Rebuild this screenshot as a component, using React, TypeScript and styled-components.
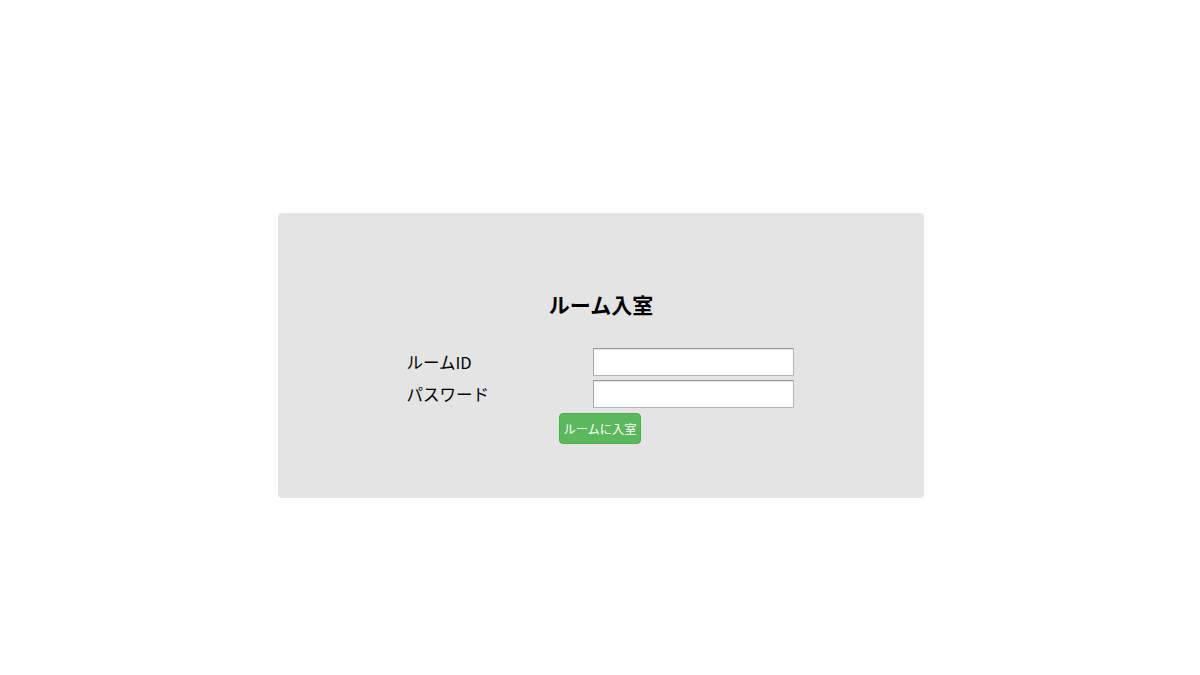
import React from "react";
import styled, { createGlobalStyle } from "styled-components";

const Global = createGlobalStyle`
  html, body { margin: 0; padding: 0; background: #fefefe; }
  body { font-family: "Noto Sans CJK JP", "Noto Sans", sans-serif; color: #000; }
`;

const Page = styled.div`
  width: 1200px;
  height: 675px;
  display: flex;
  justify-content: center;
  align-items: flex-start;
  padding-top: 213px;
  padding-left: 2px;
  box-sizing: border-box;
`;

const Panel = styled.div`
  width: 646px;
  height: 285px;
  box-sizing: border-box;
  background: #e4e4e4;
  border-radius: 4px;
  padding-top: 76px;
  display: flex;
  flex-direction: column;
  align-items: center;
`;

const Title = styled.h2`
  margin: 0;
  height: 30px;
  line-height: 30px;
  font-size: 21px;
  font-weight: 700;
  letter-spacing: 0;
`;

const Form = styled.div`
  margin-top: 29px;
  margin-left: -2px;
  display: grid;
  grid-template-columns: 186px 201px;
  row-gap: 4px;
`;

const Label = styled.label`
  font-size: 16.5px;
  line-height: 28px;
  height: 28px;
  display: flex;
  align-items: center;
`;

const Input = styled.input`
  width: 201px;
  height: 28px;
  box-sizing: border-box;
  background: #fff;
  border: 1px solid #b4b4b4;
  border-top-color: #9a9a9a;
  border-left-color: #a8a8a8;
  box-shadow: inset 0 1px 1px rgba(0, 0, 0, 0.12);
  padding: 0 4px;
  margin: 0;
  font-size: 14px;
  outline: none;
`;

const Button = styled.button`
  margin-top: 5px;
  margin-left: -2px;
  height: 31px;
  padding: 0 4px;
  background: #5cb85c;
  border: 1px solid #4cae4c;
  border-radius: 4px;
  color: #fff;
  font-family: "Noto Sans CJK JP", "Noto Sans", sans-serif;
  font-size: 12.2px;
  cursor: pointer;
`;

export default function App() {
  return (
    <>
      <Global />
      <Page>
        <Panel>
          <Title>ルーム入室</Title>
          <Form>
            <Label htmlFor="room">ルームID</Label>
            <Input id="room" type="text" />
            <Label htmlFor="pw">パスワード</Label>
            <Input id="pw" type="password" />
          </Form>
          <Button>ルームに入室</Button>
        </Panel>
      </Page>
    </>
  );
}
